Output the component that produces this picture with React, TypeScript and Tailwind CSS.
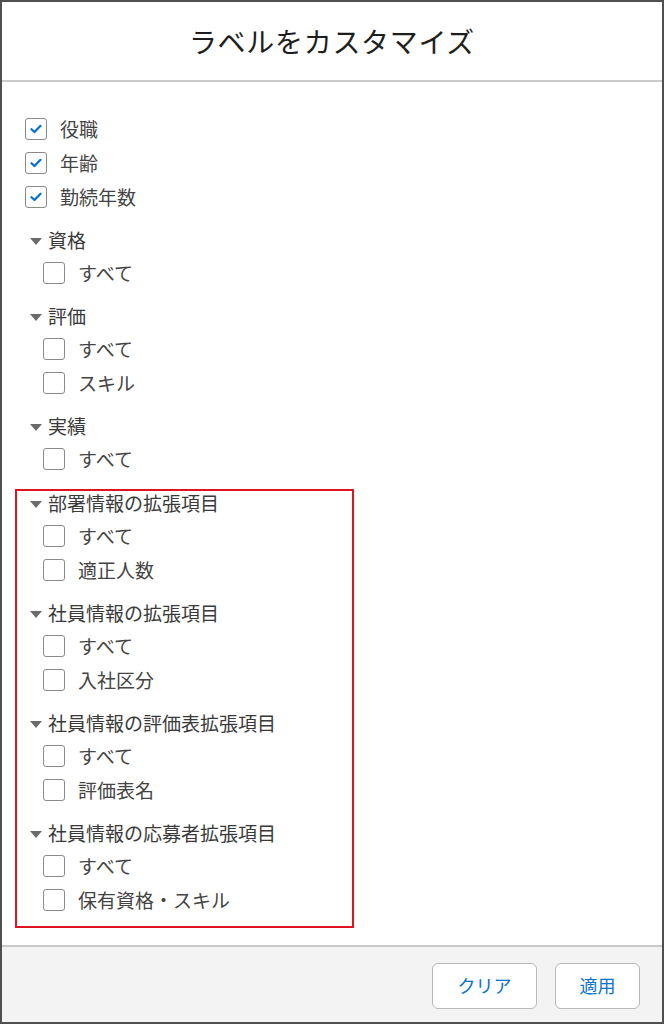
import React from 'react'

type Group = { title: string; items: string[] }

const topItems = ['役職', '年齢', '勤続年数']

const groups: Group[] = [
  { title: '資格', items: ['すべて'] },
  { title: '評価', items: ['すべて', 'スキル'] },
  { title: '実績', items: ['すべて'] },
]

const extGroups: Group[] = [
  { title: '部署情報の拡張項目', items: ['すべて', '適正人数'] },
  { title: '社員情報の拡張項目', items: ['すべて', '入社区分'] },
  { title: '社員情報の評価表拡張項目', items: ['すべて', '評価表名'] },
  { title: '社員情報の応募者拡張項目', items: ['すべて', '保有資格・スキル'] },
]

const CheckBox = ({ checked }: { checked?: boolean }) => (
  <span className="w-[22px] h-[22px] flex-shrink-0 border-[1.5px] border-[#8a8a8a] rounded-[3px] bg-white flex items-center justify-center">
    {checked && (
      <svg width="12" height="10" viewBox="0 0 12 10">
        <path d="M1.5 5.2 L4.5 8 L10.5 1.8" fill="none" stroke="#0070d2" strokeWidth="2.2" strokeLinecap="round" strokeLinejoin="round" />
      </svg>
    )}
  </span>
)

const Row = ({ label, checked }: { label: string; checked?: boolean }) => (
  <div className="h-[34px] flex flex-row items-center gap-[13px]">
    <CheckBox checked={checked} />
    <span className="text-[19px] text-[#444]">{label}</span>
  </div>
)

const GroupBlock = ({ group }: { group: Group }) => (
  <div className="mt-[14px] first:mt-0">
    <div className="h-[24px] flex flex-row items-center pl-[5px] gap-[6px]">
      <svg width="12" height="8" viewBox="0 0 12 8" className="flex-shrink-0 mt-[3px]">
        <path d="M0 0 H12 L6 7 Z" fill="#6b6b6b" />
      </svg>
      <span className="text-[19px] text-[#3a3a3a]">{group.title}</span>
    </div>
    <div className="mt-[4px] pl-[18px]">
      {group.items.map((it) => (
        <Row key={it} label={it} />
      ))}
    </div>
  </div>
)

const App = () => {
  return (
    <div
      className="w-[664px] h-[1024px] border-2 border-[#505050] bg-white flex flex-col"
      style={{ fontFamily: '"Noto Sans CJK JP", "Noto Sans", sans-serif' }}
    >
      <div className="h-[80px] flex-shrink-0 flex items-center justify-center border-b-2 border-[#cacaca]">
        <h1 className="text-[28px] text-[#1e1e1e] tracking-[0.7px]">ラベルをカスタマイズ</h1>
      </div>

      <div className="flex-1 pl-[23px] pt-[30px]">
        {topItems.map((it) => (
          <Row key={it} label={it} checked />
        ))}
        <div className="mt-[14px]">
          {groups.map((g) => (
            <GroupBlock key={g.title} group={g} />
          ))}
        </div>
        <div className="mt-[13px] -ml-[10px] w-[339px] border-2 border-[#e0141e] pl-[8px] pb-[9px]">
          {extGroups.map((g) => (
            <GroupBlock key={g.title} group={g} />
          ))}
        </div>
      </div>

      <div className="h-[77px] flex-shrink-0 border-t-2 border-[#cacaca] bg-[#f3f3f3] flex flex-row items-center justify-end gap-[18px] pr-[22px] pt-[2px]">
        <button className="w-[105px] h-[46px] bg-white border-[1.5px] border-[#b8b8b8] rounded-[6px] text-[18px] text-[#0b72c9]">
          クリア
        </button>
        <button className="w-[85px] h-[46px] bg-white border-[1.5px] border-[#b8b8b8] rounded-[6px] text-[18px] text-[#0b72c9]">
          適用
        </button>
      </div>
    </div>
  )
}

export default App
